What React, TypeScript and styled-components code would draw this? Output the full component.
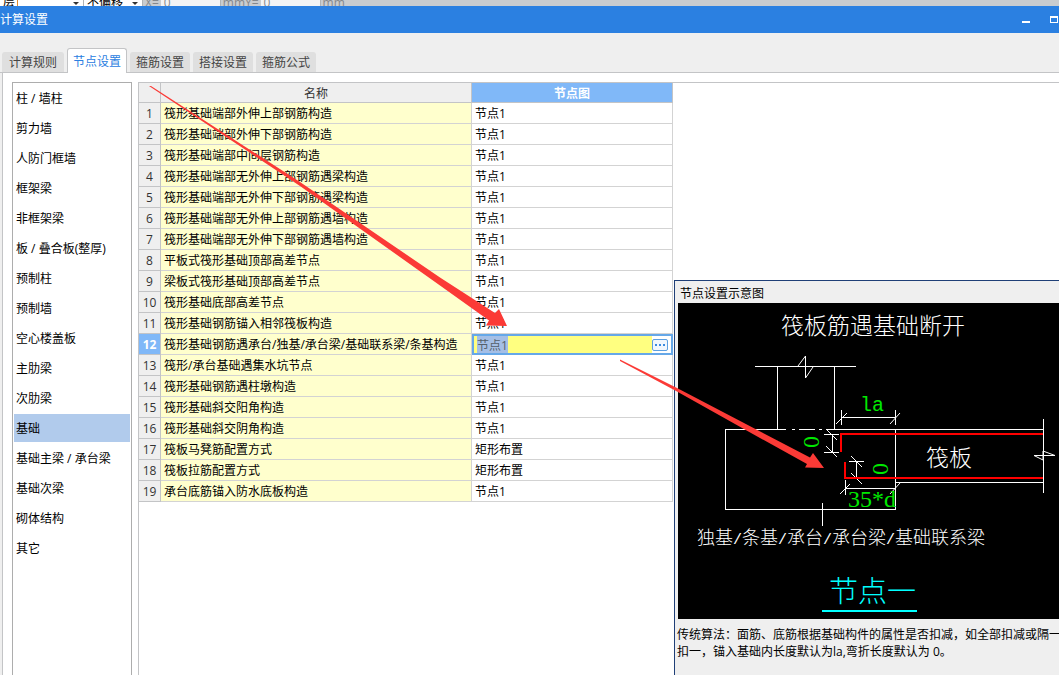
import React, { useState } from "react";
import styled, { createGlobalStyle, css } from "styled-components";

const GlobalStyle = createGlobalStyle`
  *, *::before, *::after { box-sizing: border-box; }
  body {
    margin: 0;
    overflow: hidden;
    background: #efefef;
    color: #000;
    font: 12px/16px "Open Sans", "Noto Sans CJK SC", sans-serif;
  }
  button, input { font: inherit; color: inherit; }
`;

const Window = styled.div`
  position: relative;
  display: flex;
  flex-direction: column;
  height: 100vh;
  overflow: hidden;
`;

const ToolStrip = styled.div`
  flex: none;
  display: flex;
  align-items: center;
  height: 6px;
  overflow: hidden;
  background: #c9cccf;
  color: #85888c;
  white-space: nowrap;
`;

const StripField = styled.div<{ $width: number; $dark?: boolean }>`
  flex: none;
  display: flex;
  justify-content: space-between;
  align-items: center;
  width: ${(p) => p.$width}px;
  height: 18px;
  padding: 0 4px 0 3px;
  background: ${(p) => (p.$dark ? "#fff" : "#f3f4f5")};
  color: ${(p) => (p.$dark ? "#000" : "#85888c")};
  border-right: 1px solid #b0b3b6;
`;

const StripText = styled.span`
  padding-right: 2px;
`;

const StripFocus = styled(StripText)`
  height: 18px;
  border-right: 1px solid #e08a2c;
`;

const StripLabel = styled.span`
  flex: none;
  height: 18px;
  padding: 0 2px;
  line-height: 18px;
`;

const Caret = styled.i`
  border: 3px solid transparent;
  border-top-color: #333;
  margin-top: 3px;
`;

const TitleBar = styled.header`
  flex: none;
  display: flex;
  align-items: center;
  justify-content: space-between;
  height: 27px;
  background: #2b80e1;
  color: #fff;
`;

const Title = styled.h1`
  margin: 0;
  font-size: 12px;
  font-weight: 400;
`;

const WindowButtons = styled.div`
  display: flex;
  gap: 19px;
`;

const WindowButton = styled.button`
  display: flex;
  width: 9px;
  height: 9px;
  padding: 0;
  border: 0;
  background: none;
`;

const TabBar = styled.nav`
  flex: none;
  display: flex;
  align-items: flex-end;
  gap: 3px;
  height: 40px;
  padding-left: 2px;
  border-bottom: 1px solid #c3c4c6;
`;

const Tab = styled.button<{ $active: boolean }>`
  height: 20px;
  padding: 1px 6px 0;
  border: 0;
  border-radius: 3px 3px 0 0;
  background: #dfdfdf;
  color: #444;
  line-height: 20px;

  &:first-child { padding: 1px 7px 0; }

  ${(p) =>
    p.$active &&
    css`
      height: 25px;
      margin-bottom: -1px;
      padding: 1px 5px 0;
      border: 1px solid #c3c4c6;
      border-bottom: 0;
      background: #fff;
      color: #2b80e1;
      line-height: 24px;
    `}
`;

const Body = styled.main`
  flex: 1;
  display: flex;
  gap: 6px;
  min-height: 0;
  margin-left: 2px;
  padding: 9px 0 0 9px;
  border-left: 1px solid #c3c4c6;
  background: #fff;
`;

const CategoryList = styled.ul`
  flex: none;
  display: flex;
  flex-direction: column;
  gap: 2px;
  width: 120px;
  margin: 0;
  padding: 1px;
  border: 1px solid #adadad;
  border-bottom: 0;
  list-style: none;
`;

const Category = styled.button<{ $active: boolean }>`
  display: block;
  width: 100%;
  height: 28px;
  padding: 2px 2px 0;
  border: 0;
  background: ${(p) => (p.$active ? "#b1cbec" : "transparent")};
  text-align: left;
  white-space: nowrap;
`;

const Workspace = styled.section`
  flex: 1;
  display: flex;
  align-items: flex-start;
  gap: 1px;
  min-width: 0;
  border-top: 1px solid #c3c4c6;
  border-left: 1px solid #c3c4c6;
`;

const Grid = styled.table`
  flex: none;
  width: 534px;
  table-layout: fixed;
  border-collapse: separate;
  border-spacing: 0;
`;

const HeadCell = styled.th<{ $active?: boolean }>`
  height: 20px;
  padding: 2px 0 0;
  border-right: 1px solid #c3c4c6;
  border-bottom: 1px solid #c3c4c6;
  background: ${(p) => (p.$active ? "#80b8f8" : "#efefef")};
  color: ${(p) => (p.$active ? "#fff" : "#333")};
  font-weight: ${(p) => (p.$active ? 700 : 400)};
`;

const NumberCell = styled(HeadCell)`
  height: 21px;
`;

const NameCell = styled.td`
  height: 21px;
  padding: 2px 3px 0;
  border-right: 1px solid #d3d3d3;
  border-bottom: 1px solid #d3d3d3;
  background: #ffffcd;
  white-space: nowrap;
`;

const ValueCell = styled(NameCell)`
  background: #fff;
`;

const EditCell = styled.td`
  height: 21px;
  padding: 0 1px 0 0;
  background: #ffff80;
  outline: 2px solid #66a8e8;
  outline-offset: -2px;
`;

const Editor = styled.div`
  display: flex;
  align-items: center;
  justify-content: space-between;
  height: 17px;
  padding-left: 5px;
`;

const EditorInput = styled.input`
  width: 31px;
  height: 17px;
  padding: 0;
  border: 0;
  background: #a5bfe6;
  color: #555f6b;
`;

const MoreWrap = styled.span`
  display: flex;
  align-items: center;
  width: 20px;
  height: 17px;
  background: #fff;
`;

const MoreButton = styled.button`
  display: flex;
  align-items: center;
  justify-content: center;
  gap: 2px;
  width: 16px;
  height: 12px;
  padding: 0;
  border: 1px solid #5d9fe0;
  border-radius: 2px;
  background: #f0f6fd;
`;

const Dot = styled.i`
  width: 2px;
  height: 2px;
  background: #3a8ae0;
`;

const Preview = styled.aside`
  flex: 1;
  align-self: stretch;
  min-width: 0;
  margin-top: 197px;
  padding-left: 3px;
  border-top: 1px solid #1f3f77;
  border-left: 1px solid #1f3f77;
  background: #efefef;
  overflow: hidden;
`;

const PreviewTitle = styled.h2`
  height: 22px;
  margin: 0;
  padding: 5px 2px 0;
  font-size: 12px;
  font-weight: 400;
`;

const Canvas = styled.div`
  height: 316px;
  background: #000;
`;

const Drawing = styled.svg`
  display: block;
  font-family: "Noto Sans CJK SC", sans-serif;
  font-weight: 300;
`;

const Note = styled.p`
  margin: 7px 0 0 -1px;
  line-height: 17px;
  white-space: nowrap;
`;

const Annotations = styled.svg`
  position: absolute;
  top: 0;
  left: 0;
  pointer-events: none;
`;

const tabs = ["计算规则", "节点设置", "箍筋设置", "搭接设置", "箍筋公式"];

const categories = [
  "柱 / 墙柱", "剪力墙", "人防门框墙", "框架梁", "非框架梁", "板 / 叠合板(整厚)",
  "预制柱", "预制墙", "空心楼盖板", "主肋梁", "次肋梁", "基础",
  "基础主梁 / 承台梁", "基础次梁", "砌体结构", "其它",
];

const rows: [string, string][] = [
  ["筏形基础端部外伸上部钢筋构造", "节点1"],
  ["筏形基础端部外伸下部钢筋构造", "节点1"],
  ["筏形基础端部中间层钢筋构造", "节点1"],
  ["筏形基础端部无外伸上部钢筋遇梁构造", "节点1"],
  ["筏形基础端部无外伸下部钢筋遇梁构造", "节点1"],
  ["筏形基础端部无外伸上部钢筋遇墙构造", "节点1"],
  ["筏形基础端部无外伸下部钢筋遇墙构造", "节点1"],
  ["平板式筏形基础顶部高差节点", "节点1"],
  ["梁板式筏形基础顶部高差节点", "节点1"],
  ["筏形基础底部高差节点", "节点1"],
  ["筏形基础钢筋锚入相邻筏板构造", "节点1"],
  ["筏形基础钢筋遇承台/独基/承台梁/基础联系梁/条基构造", "节点1"],
  ["筏形/承台基础遇集水坑节点", "节点1"],
  ["筏形基础钢筋遇柱墩构造", "节点1"],
  ["筏形基础斜交阳角构造", "节点1"],
  ["筏形基础斜交阴角构造", "节点1"],
  ["筏板马凳筋配置方式", "矩形布置"],
  ["筏板拉筋配置方式", "矩形布置"],
  ["承台底筋锚入防水底板构造", "节点1"],
];

const EDITED_ROW = 11;

function NodeDrawing() {
  const caption = ["独基", "条基", "承台", "承台梁", "基础联系梁"];
  return (
    <Drawing width="381" height="316" viewBox="678 303 381 316" role="img" aria-label="节点一">
      <g stroke="#fff" fill="none" shapeRendering="crispEdges">
        <path d="M755 366.5H856M777.5 366V429M834.5 366V429" />
        <path d="M725 429.5H786M792 429.5h3M799 429.5h16M819 429.5h3M826 429.5H1043" />
        <path d="M725.5 429V509.5H895.5V429M895 482.5H1043M1043.5 419V493" />
        <path d="M822.5 503V526" />
        <path d="M841 417.5H895M841.5 410V425M895.5 410V425" />
        <path d="M845 488.5H895M845.5 480V495" />
        <path d="M832.5 434V452M824 434.5H839M824 452.5H839" />
        <path d="M856.5 461V478M849 461.5H864M849 478.5H864" />
      </g>
      <g stroke="#fff" fill="none">
        <path d="M798 366L805.500 356V378L813 367" />
        <path d="M836 424L847 413M890 424L900 413M840 494L850 484M890 494L900 483" />
        <path d="M826 429L837 440M826 446L837 457M851 456L862 467M851 473L862 484" />
        <path d="M1034 455.500H1055M1034 455.500L1043 460V451L1055 455.500" />
      </g>
      <g stroke="#f00" strokeWidth="2" fill="none" shapeRendering="crispEdges">
        <path d="M841 452V434H1043M845 462V478H1043" />
      </g>
      <g fill="#fff">
        <text x="781" y="334" fontSize="23">筏板筋遇基础断开</text>
        <text x="926" y="466" fontSize="23">筏板</text>
        <text x="697" y="544" fontSize="18">
          {caption.map((part, i) => (
            <React.Fragment key={part}>
              {i > 0 && <tspan fontFamily="Liberation Mono" fontSize="15">/</tspan>}
              <tspan>{part}</tspan>
            </React.Fragment>
          ))}
        </text>
      </g>
      <g fill="#00e800" fontFamily="Liberation Serif, serif" fontSize="24">
        <text x="860" y="411" fontFamily="Liberation Mono, monospace" fontSize="20">la</text>
        <text x="848" y="507">35*d</text>
        <text transform="translate(819 448) rotate(-90)">0</text>
        <text transform="translate(888 475) rotate(-90)">0</text>
      </g>
      <text x="829" y="602" fontSize="29" fill="#0ff">节点一</text>
      <path d="M822 611H917" stroke="#0ff" strokeWidth="2" />
    </Drawing>
  );
}

export default function App() {
  const [tab, setTab] = useState(1);
  const [category, setCategory] = useState(11);
  const [value, setValue] = useState("节点1");

  return (
    <>
      <GlobalStyle />
      <Window>
        <ToolStrip>
          <StripField $width={84} $dark>
            <StripFocus>层</StripFocus>
            <Caret />
          </StripField>
          <StripField $width={59} $dark>
            <StripText>不偏移</StripText>
            <Caret />
          </StripField>
          <StripLabel>X=</StripLabel>
          <StripField $width={60}>0</StripField>
          <StripLabel>mmY=</StripLabel>
          <StripField $width={60}>0</StripField>
          <StripLabel>mm</StripLabel>
        </ToolStrip>

        <TitleBar>
          <Title>计算设置</Title>
          <WindowButtons>
            <WindowButton aria-label="最小化">
              <svg width="9" height="9"><path d="M0 6h8v2H0z" fill="#fff" /></svg>
            </WindowButton>
            <WindowButton aria-label="最大化">
              <svg width="9" height="9">
                <path d="M0 1h8v7H0zM1 3v4h6V3z" fill="#fff" fillRule="evenodd" />
              </svg>
            </WindowButton>
          </WindowButtons>
        </TitleBar>

        <TabBar>
          {tabs.map((label, i) => (
            <Tab key={label} $active={i === tab} onClick={() => setTab(i)}>{label}</Tab>
          ))}
        </TabBar>

        <Body>
          <CategoryList>
            {categories.map((label, i) => (
              <li key={label}>
                <Category $active={i === category} onClick={() => setCategory(i)}>{label}</Category>
              </li>
            ))}
          </CategoryList>

          <Workspace>
            <Grid>
              <colgroup>
                <col width="22" />
                <col width="311" />
                <col width="201" />
              </colgroup>
              <thead>
                <tr>
                  <HeadCell />
                  <HeadCell scope="col">名称</HeadCell>
                  <HeadCell scope="col" $active>节点图</HeadCell>
                </tr>
              </thead>
              <tbody>
                {rows.map(([name, node], i) => (
                  <tr key={name}>
                    <NumberCell scope="row" $active={i === EDITED_ROW}>{i + 1}</NumberCell>
                    <NameCell>{name}</NameCell>
                    {i === EDITED_ROW ? (
                      <EditCell>
                        <Editor>
                          <EditorInput
                            aria-label={name}
                            value={value}
                            onChange={(e) => setValue(e.target.value)}
                          />
                          <MoreWrap>
                            <MoreButton aria-label="选择节点图"><Dot /><Dot /><Dot /></MoreButton>
                          </MoreWrap>
                        </Editor>
                      </EditCell>
                    ) : (
                      <ValueCell>{node}</ValueCell>
                    )}
                  </tr>
                ))}
              </tbody>
            </Grid>

            <Preview>
              <PreviewTitle>节点设置示意图</PreviewTitle>
              <Canvas><NodeDrawing /></Canvas>
              <Note>
                传统算法：面筋、底筋根据基础构件的属性是否扣减，如全部扣减或隔一
                <br />
                扣一，锚入基础内长度默认为la,弯折长度默认为 0。
              </Note>
            </Preview>
          </Workspace>
        </Body>

        <Annotations width="1059" height="675" aria-hidden="true">
          <g fill="#fb3a36">
            <path d="M149 86L151 86L300 182L440 277.500L495 313L499 309L507 326L486 325.500L489 320.500L440 285.500L300 186Z" />
            <path d="M620 359.500L677 388L743 422.500L810 457.500L813 453L824 468L805 467.500L807 464L743 428.500L677 391.500L620 361Z" />
          </g>
        </Annotations>
      </Window>
    </>
  );
}
